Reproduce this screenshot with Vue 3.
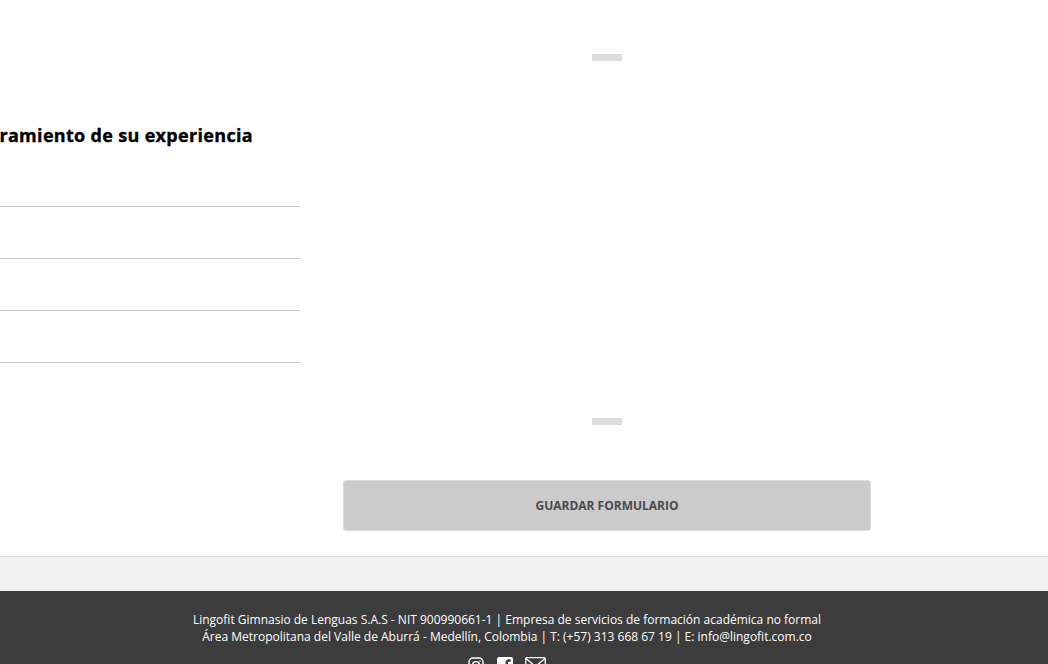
<template>
  <div class="page">
    <main class="content">
      <section class="survey">
        <h2 class="survey__title">Mejoramiento de su experiencia</h2>
        <div class="survey__rows">
          <div v-for="n in 4" :key="n" class="survey__row"></div>
        </div>
      </section>
      <section class="side">
        <div class="side__panel">
          <span class="side__dash"></span>
          <span class="side__dash"></span>
        </div>
        <button class="side__btn" type="button">GUARDAR FORMULARIO</button>
      </section>
    </main>
    <div class="strip"></div>
    <footer class="footer">
      <p class="footer__line">Lingofit Gimnasio de Lenguas S.A.S - NIT 900990661-1 | Empresa de servicios de formación académica no formal</p>
      <p class="footer__line">Área Metropolitana del Valle de Aburrá - Medellín, Colombia | T: (+57) 313 668 67 19 | E: info@lingofit.com.co</p>
      <div class="footer__icons">
        <svg class="icon-ig" width="16" height="16" viewBox="0 0 16 16" fill="none" stroke="#fff" stroke-width="1.4">
          <rect x="1" y="1" width="14" height="14" rx="4" />
          <circle cx="8" cy="8" r="3.4" />
          <circle cx="12" cy="4" r="0.7" fill="#fff" stroke="none" />
        </svg>
        <svg class="icon-fb" width="16" height="16" viewBox="0 0 16 16">
          <path fill="#fff" fill-rule="evenodd" d="M2 0h12a2 2 0 0 1 2 2v12a2 2 0 0 1-2 2h-3V10h2.2l.4-2.6H11V6c0-.8.3-1.3 1.4-1.3h1.3V2.4c-.6-.1-1.2-.1-1.9-.1-2 0-3.3 1.2-3.3 3.4v1.7H6.2V10h2.3v6H2a2 2 0 0 1-2-2V2a2 2 0 0 1 2-2z" />
        </svg>
        <svg class="icon-mail" width="21" height="16" viewBox="0 0 21 16" fill="none" stroke="#fff" stroke-width="1.3">
          <rect x="0.7" y="0.7" width="19.6" height="14.6" rx="1" />
          <path d="M1 1.5l9.5 8 9.5-8M1 15l6.7-7.5M20 15l-6.7-7.5" />
        </svg>
      </div>
    </footer>
  </div>
</template>

<script setup>
</script>

<style>
html, body { margin: 0; height: 100%; overflow: hidden; background: #fff; }
</style>

<style scoped>
.page {
  width: 1048px;
  height: 664px;
  overflow: hidden;
  display: flex;
  flex-direction: column;
  font-family: "Open Sans", "Liberation Sans", sans-serif;
  background: #fff;
}
.content {
  height: 556px;
  display: flex;
  gap: 43px;
  flex-shrink: 0;
}
.survey {
  width: 300px;
  flex-shrink: 0;
  overflow: hidden;
  padding-top: 123px;
  box-sizing: border-box;
}
.survey__title {
  margin: 0;
  width: 253px;
  height: 25px;
  display: flex;
  justify-content: flex-end;
  font-size: 18px;
  line-height: 25px;
  font-weight: 700;
  letter-spacing: 0.32px;
  -webkit-text-stroke: 0.35px #000;
  color: #000;
  white-space: nowrap;
}
.survey__rows {
  padding-top: 7px;
}
.survey__row {
  height: 51px;
  border-bottom: 1px solid #ccc;
}
.side {
  width: 528px;
  flex-shrink: 0;
}
.side__panel {
  height: 480px;
  box-sizing: border-box;
  padding-top: 54px;
  display: flex;
  flex-direction: column;
  align-items: center;
  gap: 357px;
}
.side__dash {
  width: 30px;
  height: 7px;
  background: #ddd;
}
.side__btn {
  display: block;
  width: 528px;
  height: 51px;
  border: 1px solid #ddd;
  border-radius: 3px;
  background: #cbcbcb;
  color: #4a4a4a;
  font-family: inherit;
  font-size: 12px;
  font-weight: 700;
  padding: 0;
}
.strip {
  height: 35px;
  flex-shrink: 0;
  box-sizing: border-box;
  background: #f1f1f1;
  border-top: 1px solid #ddd;
}
.footer {
  flex: 1;
  background: #3c3c3c;
  color: #fff;
  text-align: center;
  padding-top: 20px;
  padding-right: 34px;
  box-sizing: border-box;
  font-size: 12px;
  line-height: 17px;
}
.footer__line {
  margin: 0;
}
.footer__icons {
  display: flex;
  justify-content: center;
  align-items: flex-start;
  gap: 13px;
  margin-top: 12px;
}
.icon-mail {
  margin-left: -1px;
}
</style>
